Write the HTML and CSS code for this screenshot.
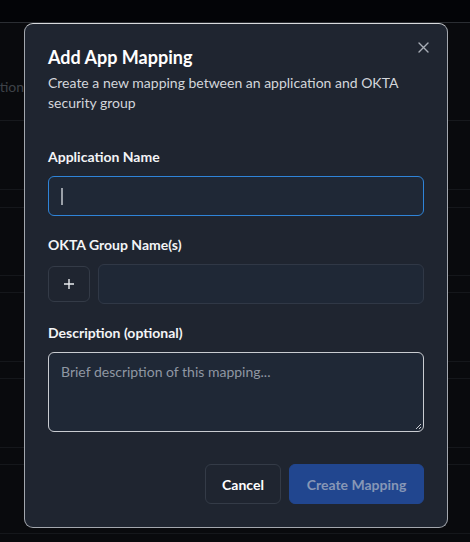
FILE: index.html
```html
<!DOCTYPE html>
<html lang="en">
<head>
<meta charset="utf-8">
<title>Add App Mapping</title>
<link rel="stylesheet" href="styles.css">
</head>
<body>
<div class="backdrop">
  <div class="topbar"></div>
  <div class="thead"><div class="th-cell"><span>Application</span></div></div>
  <div class="gap g69"></div>
  <div class="strip s18"></div>
  <div class="gap"></div>
  <div class="strip"></div>
  <div class="gap g69"></div>
  <div class="strip"></div>
  <div class="gap g69"></div>
  <div class="strip"></div>
  <div class="gap g69"></div>
</div>

<div class="modal" role="dialog">
  <button class="close" aria-label="Close">
    <svg width="11" height="11" viewBox="0 0 11 11"><path d="M1 1 L10 10 M10 1 L1 10" stroke="currentColor" stroke-width="1.4" stroke-linecap="round"/></svg>
  </button>
  <div class="header">
    <h2 class="title">Add App Mapping</h2>
    <p class="subtitle">Create a new mapping between an application and OKTA security group</p>
  </div>
  <form class="form">
    <div class="field">
      <label class="label">Application Name</label>
      <div class="input focused"><span class="caret"></span></div>
    </div>
    <div class="field">
      <label class="label">OKTA Group Name(s)</label>
      <div class="group-row">
        <button type="button" class="plus">
          <svg width="12" height="12" viewBox="0 0 12 12"><path d="M6 1 V11 M1 6 H11" stroke="currentColor" stroke-width="1.4"/></svg>
        </button>
        <div class="input grow"></div>
      </div>
    </div>
    <div class="field">
      <label class="label">Description (optional)</label>
      <div class="textarea"><span class="placeholder">Brief description of this mapping...</span>
        <svg class="grip" width="8" height="8" viewBox="0 0 8 8"><path d="M7 2 L2 7 M7 5 L5 7" stroke="#c7cad0" stroke-width="1"/></svg>
      </div>
    </div>
    <div class="actions">
      <button type="button" class="btn cancel">Cancel</button>
      <button type="button" class="btn primary">Create Mapping</button>
    </div>
  </form>
</div>
</body>
</html>
```

FILE: styles.css
```css
* { box-sizing: border-box; }
html, body { margin: 0; padding: 0; }
body {
  width: 470px;
  height: 542px;
  overflow: hidden;
  background: #090a0d;
  font-family: "Lato", "Noto Sans", sans-serif;
  position: relative;
}
.backdrop { display: flex; flex-direction: column; }
.topbar { flex: none; height: 23px; background: #030407; border-bottom: 1px solid #2b2e33; }
.thead {
  flex: none;
  height: 98px;
  border-bottom: 1px solid #17191d;
  display: flex;
  align-items: flex-end;
  padding-bottom: 23px;
}
.th-cell {
  width: 24px;
  display: flex;
  justify-content: flex-end;
  white-space: nowrap;
  color: #3e4248;
  font-size: 14px;
  line-height: 20px;
}
.gap { flex: none; height: 68px; border-bottom: 1px solid #15171b; }
.gap.g69 { height: 69px; }
.strip { flex: none; height: 17px; border-bottom: 1px solid #15171b; }
.strip.s18 { height: 18px; }

.modal {
  position: absolute;
  left: 24px;
  top: 23px;
  width: 424px;
  height: 505px;
  background: #1f2530;
  border: 1px solid #a3a7ae;
  border-top-color: #d8dadd;
  border-radius: 9px;
  padding: 19px 23px 23px;
}
.close {
  position: absolute;
  top: 18px;
  right: 18px;
  width: 11px;
  height: 11px;
  padding: 0;
  border: 0;
  background: none;
  color: #a8adb6;
  display: flex;
  align-items: center;
  justify-content: center;
}
.header { display: flex; flex-direction: column; gap: 2px; }
.title {
  margin: 0;
  font-size: 18px;
  line-height: 28px;
  font-weight: 700;
  color: #ffffff;
}
.subtitle {
  margin: 0;
  font-size: 14px;
  line-height: 20px;
  color: #d3d6db;
}
.form { display: flex; flex-direction: column; gap: 19px; margin-top: 34px; }
.field { display: flex; flex-direction: column; gap: 9px; }
.label {
  font-size: 14px;
  line-height: 20px;
  font-weight: 700;
  color: #f3f4f6;
}
.input {
  height: 40px;
  background: #1f2836;
  border: 1px solid #303846;
  border-radius: 6px;
  display: flex;
  align-items: center;
  padding: 0 12px;
}
.input.focused { border-color: #2f84d8; }
.caret { width: 2px; height: 17px; background: #9aa0a8; }
.group-row { display: flex; align-items: center; gap: 8px; }
.plus {
  width: 42px;
  height: 36px;
  flex: none;
  background: #1f2530;
  border: 1px solid #343b47;
  border-radius: 6px;
  color: #e9ebee;
  display: flex;
  align-items: center;
  justify-content: center;
  padding: 0;
}
.grow { flex: 1; }
.textarea {
  position: relative;
  height: 80px;
  background: #1f2836;
  border: 1px solid #c9ccd1;
  border-radius: 6px;
  padding: 8px 12px;
}
.placeholder { font-size: 14px; line-height: 20px; color: #8f97a3; }
.grip { position: absolute; right: 1px; bottom: 1px; }
.actions {
  display: flex;
  justify-content: flex-end;
  gap: 8px;
  margin-top: 13px;
}
.btn {
  height: 40px;
  border-radius: 6px;
  font-family: inherit;
  font-size: 14px;
  font-weight: 700;
  padding: 0;
  white-space: nowrap;
}
.cancel {
  width: 76px;
  background: #1f2530;
  border: 1px solid #343b47;
  color: #ffffff;
}
.primary {
  width: 135px;
  background: #21468f;
  border: 1px solid #21468f;
  color: #8797b6;
}
```
